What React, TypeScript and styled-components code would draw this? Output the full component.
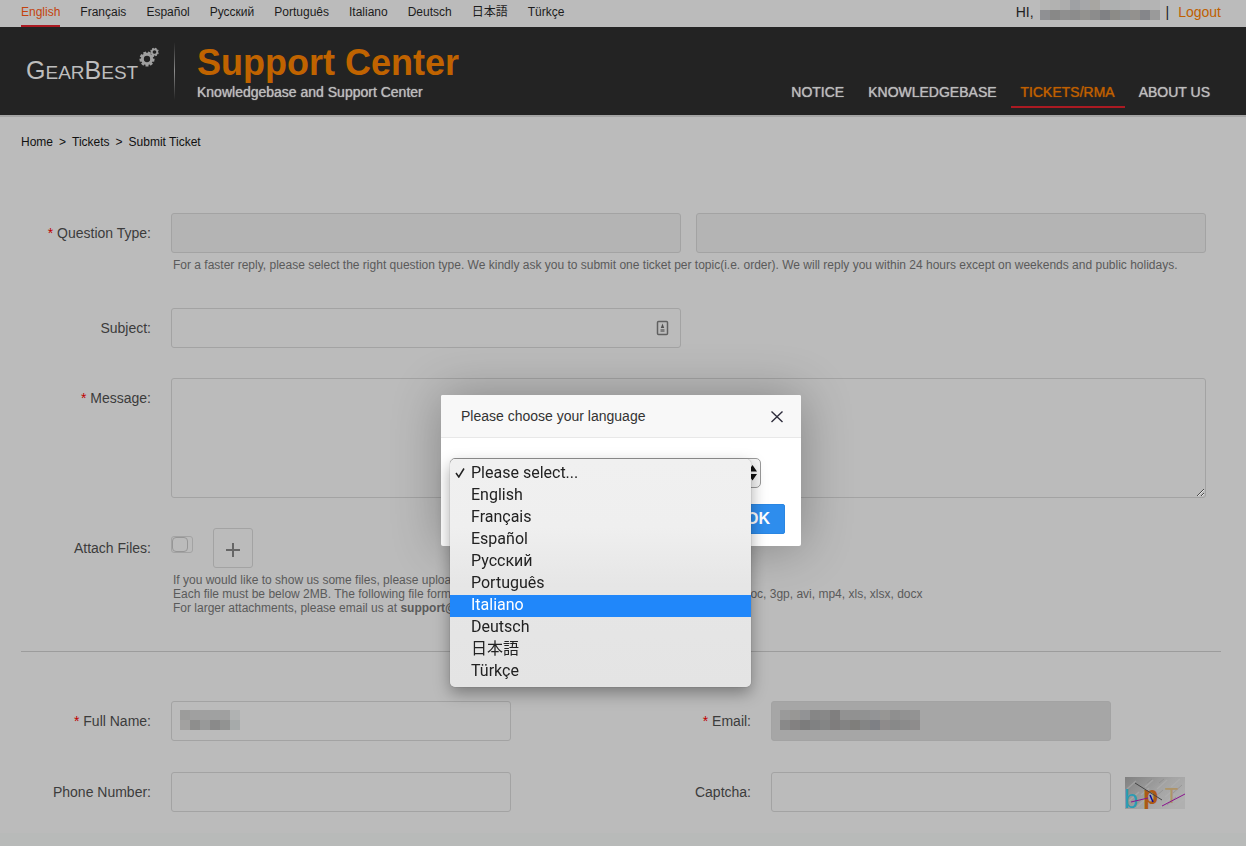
import React from "react";
import styled, { createGlobalStyle } from "styled-components";

const GlobalStyle = createGlobalStyle`
  *, *::before, *::after { box-sizing: border-box; }
  body {
    margin: 0;
    background: #bbbbbb;
    color: #222222;
    font-family: "Liberation Sans", Arial, "Noto Sans CJK JP", sans-serif;
    font-size: 14px;
  }
  a { color: inherit; text-decoration: none; }
  input, textarea, select, button { font: inherit; color: inherit; margin: 0; }
  ul { list-style: none; margin: 0; padding: 0; }
`;

const Page = styled.div`
  min-height: 100vh;
  display: flex;
  flex-direction: column;
`;

const TopBar = styled.div`
  display: flex;
  justify-content: space-between;
  height: 27px;
  padding: 0 25px 0 21px;
`;

const Languages = styled.nav`
  display: flex;
  gap: 20px;
  font-size: 12px;
`;

const LanguageLink = styled.a<{ $active?: boolean }>`
  height: 27px;
  line-height: 24px;
  white-space: nowrap;
  color: ${(p) => (p.$active ? "#c3430f" : "#1c1c1c")};
  border-bottom: 2px solid ${(p) => (p.$active ? "#ab1a22" : "transparent")};
`;

const Account = styled.div`
  display: flex;
  line-height: 25px;
  gap: 6px;
  white-space: nowrap;
`;

const Logout = styled.a`
  margin-left: 3px;
  color: #bf5f00;
`;

const Header = styled.header`
  display: flex;
  justify-content: space-between;
  height: 90px;
  padding: 0 26px;
  background: #232323;
  border-bottom: 2px solid #a4a4a4;
  color: #bcbcbc;
`;

const Brand = styled.div`
  display: flex;
  align-items: center;
`;

const Logo = styled.a`
  display: flex;
  align-items: center;
  justify-content: space-between;
  height: 58px;
  width: 133px;
  color: #bdbdbd;
`;

const Wordmark = styled.span`
  font-size: 19px;
  line-height: 58px;
  white-space: nowrap;
`;

const BigLetter = styled.span`
  font-size: 25px;
`;

const Gears = styled.svg`
  flex: none;
  align-self: flex-start;
  margin-top: 4px;
`;

const Divider = styled.span`
  width: 1px;
  height: 58px;
  margin: 0 22px 0 15px;
  background: linear-gradient(#232323, #8c8c8c, #232323);
`;

const BrandText = styled.div`
  padding-top: 1px;
`;

const BrandTitle = styled.h1`
  margin: 0;
  font-size: 36px;
  line-height: 40px;
  color: #c06300;
`;

const BrandSub = styled.p`
  margin: 0;
  line-height: 18px;
  text-shadow: 0 0 1px #bcbcbc;
`;

const MainNav = styled.nav`
  display: flex;
  align-items: flex-end;
  gap: 4px;
  padding-bottom: 7px;
`;

const MainNavLink = styled.a<{ $active?: boolean }>`
  padding: 0 10px 2px;
  line-height: 24px;
  white-space: nowrap;
  color: ${(p) => (p.$active ? "#bf5f00" : "#bcbcbc")};
  text-shadow: 0 0 1px currentColor;
  border-bottom: 2px solid ${(p) => (p.$active ? "#ab1a22" : "transparent")};
`;

const Breadcrumb = styled.nav`
  display: flex;
  gap: 6px;
  padding: 0 21px;
  margin-bottom: 46px;
  font-size: 12px;
  line-height: 50px;
  color: #111111;
`;

const Form = styled.form`
  padding: 0 25px 0 21px;
  color: #3c3c3c;
`;

const Row = styled.div`
  display: grid;
  grid-template-columns: 150px minmax(0, 1fr);
  margin-bottom: 30px;
  padding-right: 15px;
`;

const Label = styled.label`
  padding-right: 20px;
  line-height: 40px;
  text-align: right;
  white-space: nowrap;
`;

const Star = styled.span`
  color: #c00000;
`;

const Pair = styled.div`
  display: grid;
  grid-template-columns: 1fr 1fr;
  gap: 15px;
`;

const Field = styled.div`
  position: relative;
  display: flex;
`;

const controlBox = `
  display: block;
  width: 100%;
  border: 1px solid #a3a3a3;
  border-radius: 3px;
  outline: none;
`;

const TextInput = styled.input<{ $locked?: boolean }>`
  ${controlBox}
  height: 40px;
  padding: 0 10px;
  background: ${(p) => (p.$locked ? "#a6a6a6" : "#bbbbbb")};
`;

const TypeSelect = styled.select`
  ${controlBox}
  appearance: none;
  height: 40px;
  background: #b4b4b4;
`;

const MessageBox = styled.textarea`
  ${controlBox}
  height: 120px;
  padding: 10px;
  background: #bbbbbb;
  resize: both;
`;

const Help = styled.div`
  padding: 5px 2px 6px;
  font-size: 12px;
  line-height: 14px;
  color: #5a5a5a;
`;

const FieldIcon = styled.svg`
  position: absolute;
  right: 12px;
  top: 12px;
`;

const AttachTools = styled.div`
  display: flex;
  align-items: flex-start;
  gap: 20px;
`;

const AttachCheck = styled.input`
  appearance: none;
  width: 22px;
  height: 17px;
  margin-top: 8px;
  border: 1px solid #a3a3a3;
  border-radius: 3px;
  &::before {
    content: "";
    display: block;
    width: 16px;
    height: 15px;
    border: 1px solid #969696;
    border-radius: 4px;
  }
`;

const AddButton = styled.button`
  display: grid;
  place-items: center;
  width: 40px;
  height: 40px;
  padding: 3px 0 0;
  border: 1px solid #a3a3a3;
  border-radius: 3px;
  background: none;
`;

const Rule = styled.hr`
  margin: 0 0 49px;
  border: 0;
  height: 1px;
  background: #9c9c9c;
`;

const Contact = styled.div`
  display: grid;
  grid-template-columns: 1fr 1fr;
  row-gap: 31px;
  margin-bottom: 21px;
`;

const ContactCell = styled.div`
  display: grid;
  grid-template-columns: 150px 340px auto;
  justify-content: start;
  align-items: center;
`;

const Redacted = styled.svg`
  display: block;
  flex: none;
`;

const FieldRedacted = styled(Redacted)`
  position: absolute;
  left: 9px;
  top: 9px;
`;

const Captcha = styled.svg`
  margin: 2px 0 0 14px;
`;

const Footer = styled.footer`
  flex: 1;
  background: #b8bab9;
`;

const Overlay = styled.div`
  position: fixed;
  inset: 0;
  display: flex;
  justify-content: center;
  align-items: flex-start;
  padding: 395px 4px 0 0;
`;

const Dialog = styled.section`
  width: 360px;
  background: #ffffff;
  border-radius: 2px;
  box-shadow: 1px 1px 50px rgba(0, 0, 0, 0.3);
`;

const DialogHeader = styled.header`
  display: flex;
  justify-content: space-between;
  align-items: center;
  height: 43px;
  padding: 0 17px 0 20px;
  background: #f8f8f8;
  border-bottom: 1px solid #e8e8e8;
  border-radius: 2px 2px 0 0;
`;

const DialogTitle = styled.h2`
  margin: 0;
  font-size: 14px;
  font-weight: normal;
  color: #333333;
`;

const CloseButton = styled.button`
  display: flex;
  padding: 0;
  border: 0;
  background: none;
`;

const DialogBody = styled.div`
  display: flex;
  flex-direction: column;
  align-items: flex-end;
  gap: 16px;
  padding: 20px 16px 12px 9px;
`;

const Picker = styled.div`
  position: relative;
  align-self: flex-start;
  width: 311px;
`;

const PickerSelect = styled.select`
  display: block;
  appearance: none;
  width: 100%;
  height: 30px;
  border: 1px solid #9a9a9a;
  border-radius: 5px;
  background: #f6f6f6;
`;

const Arrows = styled.svg`
  position: absolute;
  right: 4px;
  top: 7px;
`;

const Menu = styled.ul`
  position: absolute;
  z-index: 1;
  left: 0;
  top: 1px;
  width: 301px;
  padding: 4px 0;
  border-radius: 5px;
  background: linear-gradient(#f0f0f0, #efefef 30%, #e6e6e6 55%, #e4e4e4);
  box-shadow: 0 0 1px rgba(0, 0, 0, 0.5), 0 6px 16px rgba(0, 0, 0, 0.35);
  font-family: Roboto, "Noto Sans CJK JP", sans-serif;
  font-size: 16px;
`;

const MenuItem = styled.li<{ $active?: boolean }>`
  display: flex;
  align-items: center;
  height: 22px;
  padding: 0 0 3px 5px;
  line-height: 18px;
  color: ${(p) => (p.$active ? "#ffffff" : "#222222")};
  background: ${(p) => (p.$active ? "#2087fa" : "transparent")};
`;

const Tick = styled.span`
  display: flex;
  width: 16px;
`;

const OkButton = styled.button`
  width: 54px;
  height: 30px;
  padding: 0;
  border: 1px solid #2a86e2;
  border-radius: 2px;
  background: #2e8ded;
  color: #ffffff;
  font-size: 16px;
  font-weight: bold;
`;

const languages = ["English", "Français", "Español", "Русский", "Português", "Italiano", "Deutsch", "日本語", "Türkçe"];
const options = ["Please select...", ...languages];

function Mosaic({ as: Box = Redacted, rows, cell }: { as?: any; rows: string[][]; cell: number }) {
  const width = rows[0].length * cell;
  return (
    <Box width={width} height={rows.length * 10} shapeRendering="crispEdges" aria-hidden="true">
      {rows.map((row, y) =>
        row.map((fill, x) => <rect key={`${x}-${y}`} x={x * cell} y={y * 10} width={cell} height={10} fill={fill} />)
      )}
    </Box>
  );
}

const userCells = [
  ["#b5b5b4", "#b2b2b1", "#adadad", "#9fa1a4", "#a6a7a9", "#a8a6a2", "#b0b0b0", "#aeb0b0", "#b0b1b1", "#b5b5b5", "#b3b3b3", "#b4b4b4"],
  ["#8f9093", "#888887", "#8f8f8f", "#8c8c8c", "#93928f", "#8c8c8c", "#808184", "#8c8b87", "#8d9092", "#93918e", "#85868a", "#9a9a9a"],
];
const nameCells = [
  ["#9c9c9b", "#a0a0a0", "#a0a0a0", "#a0a1a1", "#a0a0a0", "#b0b2b2"],
  ["#a2a1a0", "#8e8e8d", "#989999", "#8a8a8a", "#929392", "#a6aaaa"],
];
const emailCells = [
  ["#9a9a9a", "#989795", "#929395", "#868686", "#888888", "#807f7f", "#929292", "#919191", "#919292", "#939496", "#979694", "#8f8f8f", "#929292", "#939393"],
  ["#898989", "#838181", "#7c7c7c", "#808182", "#848585", "#7f7d7d", "#838383", "#7f7e7b", "#848585", "#7e8085", "#8e8b8b", "#888989", "#8b8b8b", "#8e8c8c"],
];

function Gear({ cx, cy, r, teeth }: { cx: number; cy: number; r: number; teeth: number }) {
  return (
    <g transform={`translate(${cx} ${cy})`}>
      <circle r={r * 0.62} fill="none" stroke="#a0a0a0" strokeWidth={r * 0.4} />
      {Array.from({ length: teeth }, (_, i) => (
        <rect
          key={i}
          x={-r * 0.2}
          y={-r}
          width={r * 0.4}
          height={r * 0.3}
          fill="#a0a0a0"
          transform={`rotate(${(360 / teeth) * i + 20})`}
        />
      ))}
    </g>
  );
}

export default function App() {
  return (
    <>
      <GlobalStyle />
      <Page>
        <TopBar>
          <Languages aria-label="Language">
            {languages.map((name, i) => (
              <LanguageLink key={name} href="#" $active={i === 0}>{name}</LanguageLink>
            ))}
          </Languages>
          <Account>
            <span>HI,</span>
            <Mosaic rows={userCells} cell={10} />
            <span>|</span>
            <Logout href="#">Logout</Logout>
          </Account>
        </TopBar>

        <Header>
          <Brand>
            <Logo href="#" aria-label="GearBest">
              <Wordmark><BigLetter>G</BigLetter>EAR<BigLetter>B</BigLetter>EST</Wordmark>
              <Gears width="20" height="22" viewBox="0 0 20 22" aria-hidden="true">
                <Gear cx={8} cy={13} r={7.5} teeth={9} />
                <Gear cx={15.5} cy={6} r={4.3} teeth={8} />
              </Gears>
            </Logo>
            <Divider />
            <BrandText>
              <BrandTitle>Support Center</BrandTitle>
              <BrandSub>Knowledgebase and Support Center</BrandSub>
            </BrandText>
          </Brand>
          <MainNav aria-label="Main">
            <MainNavLink href="#">NOTICE</MainNavLink>
            <MainNavLink href="#">KNOWLEDGEBASE</MainNavLink>
            <MainNavLink href="#" $active>TICKETS/RMA</MainNavLink>
            <MainNavLink href="#">ABOUT US</MainNavLink>
          </MainNav>
        </Header>

        <Breadcrumb aria-label="Breadcrumb">
          <a href="#">Home</a>
          <span>&gt;</span>
          <a href="#">Tickets</a>
          <span>&gt;</span>
          <a href="#">Submit Ticket</a>
        </Breadcrumb>

        <Form>
          <Row>
            <Label htmlFor="qtype"><Star>*</Star> Question Type:</Label>
            <div>
              <Pair>
                <TypeSelect id="qtype" />
                <TypeSelect aria-label="Question subtype" />
              </Pair>
              <Help>
                For a faster reply, please select the right question type. We kindly ask you to submit one ticket per
                topic(i.e. order). We will reply you within 24 hours except on weekends and public holidays.
              </Help>
            </div>
          </Row>
          <Row>
            <Label htmlFor="subject">Subject:</Label>
            <Pair>
              <Field>
                <TextInput id="subject" type="text" />
                <FieldIcon width="13" height="16" viewBox="0 0 13 16" aria-hidden="true">
                  <rect x="1.500" y="1.500" width="10" height="13" rx="1" fill="none" stroke="#606060" strokeWidth="1.500" />
                  <path d="M6.500 3.500l1.700 4.500H4.800z" fill="#505050" />
                  <path d="M4.500 9h4v3h-4z" fill="#7c7c7c" />
                </FieldIcon>
              </Field>
            </Pair>
          </Row>
          <Row>
            <Label htmlFor="message"><Star>*</Star> Message:</Label>
            <MessageBox id="message" />
          </Row>
          <Row>
            <Label htmlFor="attach">Attach Files:</Label>
            <div>
              <AttachTools>
                <AttachCheck id="attach" type="checkbox" />
                <AddButton type="button" aria-label="Add file">
                  <svg width="14" height="14" viewBox="0 0 14 14" aria-hidden="true">
                    <path d="M7 0v14M0 7h14" stroke="#666666" strokeWidth="2" />
                  </svg>
                </AddButton>
              </AttachTools>
              <Help>
                If you would like to show us some files, please upload them here.
                <br />
                Each file must be below 2MB. The following file formats are supported: jpg, jpeg, png, bmp, gif, pdf, zip, txt, doc, 3gp, avi, mp4, xls, xlsx, docx
                <br />
                For larger attachments, please email us at <b>support@gearbest.com</b>
              </Help>
            </div>
          </Row>
          <Rule />
          <Contact>
            <ContactCell>
              <Label htmlFor="name"><Star>*</Star> Full Name:</Label>
              <Field>
                <TextInput id="name" type="text" />
                <Mosaic as={FieldRedacted} rows={nameCells} cell={10} />
              </Field>
            </ContactCell>
            <ContactCell>
              <Label htmlFor="email"><Star>*</Star> Email:</Label>
              <Field>
                <TextInput id="email" type="email" readOnly $locked />
                <Mosaic as={FieldRedacted} rows={emailCells} cell={10} />
              </Field>
            </ContactCell>
            <ContactCell>
              <Label htmlFor="phone">Phone Number:</Label>
              <TextInput id="phone" type="tel" />
            </ContactCell>
            <ContactCell>
              <Label htmlFor="captcha">Captcha:</Label>
              <TextInput id="captcha" type="text" />
              <Captcha width="60" height="32" viewBox="0 0 60 32" role="img" aria-label="Captcha code">
                <defs>
                  <linearGradient id="noise" x1="0" y1="0" x2="1" y2="0.6">
                    <stop offset="0" stopColor="#808080" />
                    <stop offset="0.6" stopColor="#a4a4a4" />
                    <stop offset="1" stopColor="#b0b0b0" />
                  </linearGradient>
                </defs>
                <rect width="60" height="32" fill="url(#noise)" />
                <path
                  d="M4 24l10-9M12 30l12-11M2 12l9-8M20 10l8-7M26 24l8-7M32 12l10-9M36 30l14-13M46 10l9-8M50 30l9-8M40 20l7-6M16 18l8-7"
                  stroke="#b4b4b4"
                  strokeWidth="1.500"
                  opacity="0.5"
                />
                <path d="M8 30l9-8M22 6l5-4M30 20l8-7M42 28l9-8M48 16l9-8M34 6l5-4" stroke="#868686" opacity="0.5" />
                <text x="-1" y="31" fontSize="25" fontFamily="Liberation Sans" fill="#2b9cb4">b</text>
                <text x="18" y="27" fontSize="25" fontWeight="bold" fontFamily="Liberation Sans" fill="#ac5a14">p</text>
                <text x="40" y="26" fontSize="22" fontFamily="Liberation Sans" fill="#ae9468">T</text>
                <path d="M10 6l27 17" stroke="#444444" />
                <path d="M6 25l17-4M37 29l23-12" stroke="#8a128e" />
                <path d="M25 18l3 7" stroke="#0a0aa0" strokeWidth="1.500" />
              </Captcha>
            </ContactCell>
          </Contact>
        </Form>
        <Footer />
      </Page>

      <Overlay>
        <Dialog role="dialog" aria-labelledby="dialog-title">
          <DialogHeader>
            <DialogTitle id="dialog-title">Please choose your language</DialogTitle>
            <CloseButton type="button" aria-label="Close">
              <svg width="14" height="14" viewBox="0 0 14 14" aria-hidden="true">
                <path d="M1.500 2.500l11 10.500M12.500 2.500l-11 10.500" stroke="#2d2c3b" strokeWidth="1.400" />
              </svg>
            </CloseButton>
          </DialogHeader>
          <DialogBody>
            <Picker>
              <PickerSelect aria-label="Language" />
              <Arrows width="9" height="16" viewBox="0 0 9 16" aria-hidden="true">
                <path d="M0 6.500L4.500 0 9 6.500zM0 9l4.500 6.500L9 9z" fill="#111111" />
              </Arrows>
              <Menu role="listbox" aria-label="Language">
                {options.map((name, i) => (
                  <MenuItem key={name} role="option" aria-selected={i === 0} $active={name === "Italiano"}>
                    <Tick>
                      {i === 0 && (
                        <svg width="10" height="11" viewBox="0 0 10 11" aria-hidden="true">
                          <path d="M1 6l2.800 4L9 1.500" fill="none" stroke="#222222" strokeWidth="1.500" />
                        </svg>
                      )}
                    </Tick>
                    {name}
                  </MenuItem>
                ))}
              </Menu>
            </Picker>
            <OkButton type="button">OK</OkButton>
          </DialogBody>
        </Dialog>
      </Overlay>
    </>
  );
}
